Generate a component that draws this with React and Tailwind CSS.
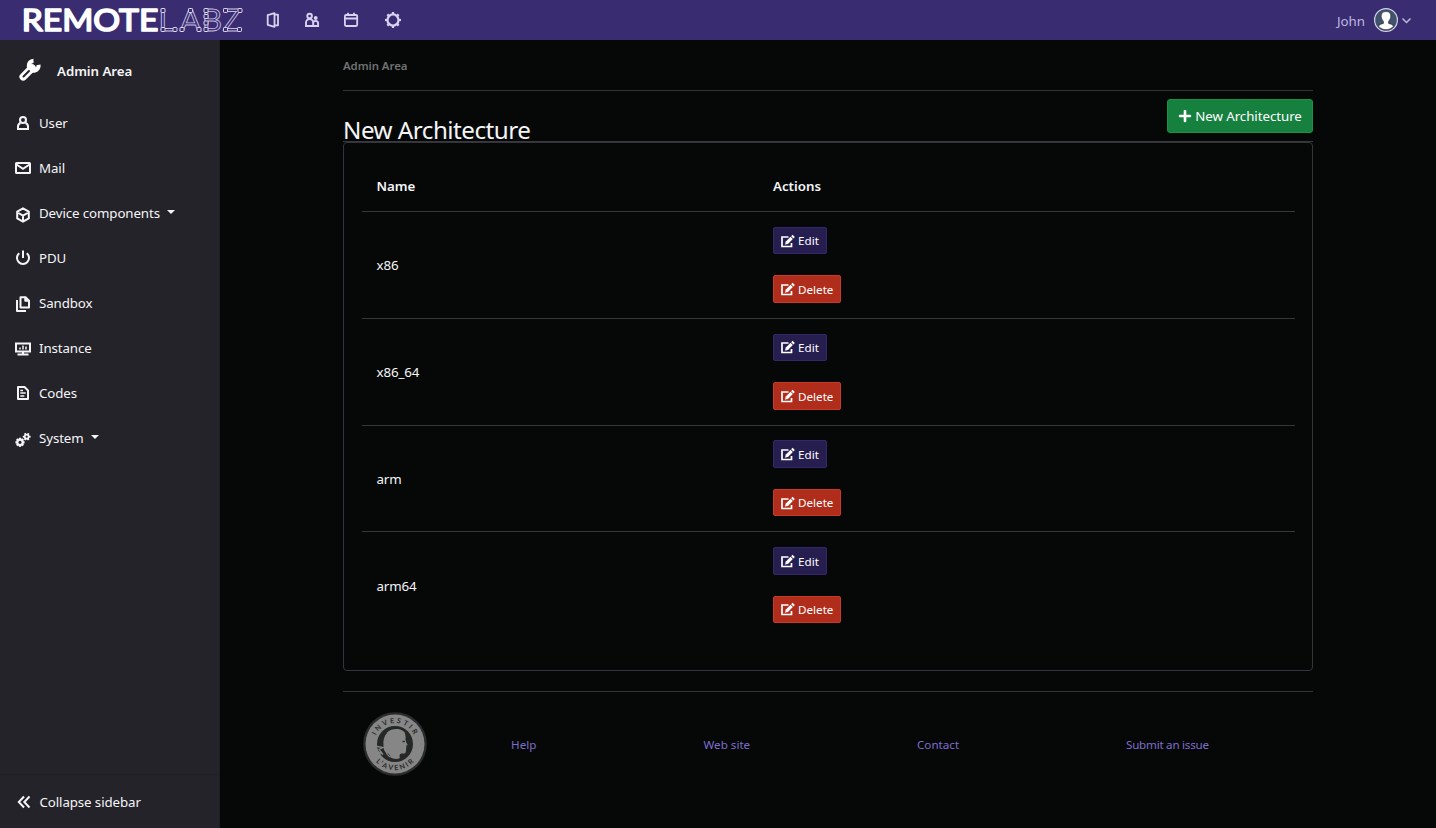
import React from "react";
import { FaPlus } from "react-icons/fa";

function Icon({ children, size = 16, className = "", sw = 2 }) {
  return (
    <svg width={size} height={size} viewBox="0 0 16 16" fill="none" stroke="currentColor" strokeWidth={sw} className={"shrink-0 " + className}>
      {children}
    </svg>
  );
}

function Logo() {
  const nodes = [
    [163, 10.5], [163, 29.5], [175, 29.5], [182, 29.5], [190.5, 10.5], [199, 29.5],
    [206, 10.5], [206, 16.5], [206, 23], [206, 29.5], [225.5, 10.5], [240, 10.5], [225.5, 29.5], [239.5, 29.5],
  ];
  return (
    <svg width="250" height="40" viewBox="0 0 250 40" className="shrink-0" fontFamily="Lato, sans-serif">
      <text x="21.800" y="30.600" fontSize="30.500" fontWeight="400" fill="#fff" stroke="#fff" strokeWidth="1.700" strokeLinejoin="round" textLength="136.500" lengthAdjust="spacingAndGlyphs">REMOTE</text>
      <text x="158.500 180 202 222.500" y="31.200" fontSize="31" fontWeight="400" fill="none" stroke="#c5bfe2" strokeWidth="0.9">LABZ</text>
      {nodes.map(([x, y], i) => (
        <rect key={i} x={x - 2} y={y - 2} width="4" height="4" rx="0.8" fill="#392c70" stroke="#e0dcf0" strokeWidth="1" />
      ))}
    </svg>
  );
}

const Gear = ({ cx, cy, r, w, t, n = 8 }) => (
  <>
    <circle cx={cx} cy={cy} r={r} strokeWidth={w} />
    {Array.from({ length: n }, (_, i) => {
      const a = (i * 2 * Math.PI) / n;
      const c = Math.cos(a), s = Math.sin(a);
      return <line key={i} x1={cx + c * r} y1={cy + s * r} x2={cx + c * (r + t)} y2={cy + s * (r + t)} strokeWidth={w} />;
    })}
  </>
);

const icons = {
  user: (
    <Icon className="relative -top-px">
      <circle cx="8" cy="5" r="3" />
      <path d="M5.500 8C3.700 8.800 3 10.200 3 11.500V14h10v-2.500c0-1.300-.7-2.700-2.500-3.500" />
    </Icon>
  ),
  mail: (
    <Icon className="relative -top-px">
      <rect x="1" y="3" width="14" height="10" rx="0.6" />
      <path d="M1.500 4.500 8 8.800l6.500-4.300" />
    </Icon>
  ),
  device: (
    <Icon className="relative top-px">
      <path d="M8 1.300 13.800 4.600v6.800L8 14.700 2.200 11.400V4.600ZM2.500 5.500 8 8.600l5.500-3.100M8 8.600v6" strokeWidth="2" strokeLinejoin="round" />
    </Icon>
  ),
  pdu: (
    <Icon className="relative -top-px">
      <path d="M4.300 3.200a6 6 0 1 0 7.400 0M8 .5v7.500" />
    </Icon>
  ),
  sandbox: (
    <Icon>
      <path d="M5.500 1.200h5L14 4.700V11.500H5.500ZM2 4v11h9" strokeLinejoin="round" />
      <path d="M9.800 1v4.200H14V4.700L10.500 1.200Z" fill="currentColor" strokeWidth="1" />
    </Icon>
  ),
  instance: (
    <Icon>
      <path d="M1 2.500h14v8H1ZM8 10.500v3M2.500 13.500h11" />
      <path d="M5 6.500v2M8 4.500v4M11 5.500v3" strokeWidth="1.500" />
    </Icon>
  ),
  codes: (
    <Icon className="relative -top-px">
      <path d="M3 2h6.500L13 5.500V14H3Z" strokeLinejoin="round" />
      <path d="M5.300 8h5.400M5.300 11h4M5.300 5.500H8" strokeWidth="1.600" />
    </Icon>
  ),
  system: (
    <Icon className="relative top-px">
      <Gear cx={5} cy={10.300} r={2.700} w={2.200} t={1.900} />
      <Gear cx={11.700} cy={4.700} r={2} w={1.800} t={1.900} n={6} />
    </Icon>
  ),
};

const items = [
  ["user", "User"], ["mail", "Mail"], ["device", "Device components", true], ["pdu", "PDU"],
  ["sandbox", "Sandbox"], ["instance", "Instance"], ["codes", "Codes"], ["system", "System", true],
];

function Header() {
  return (
    <header className="flex h-10 shrink-0 items-center bg-[#392c70] text-[#d8d3f0]">
      <Logo />
      <nav className="flex h-full items-center gap-[23px] pl-[15px]">
        <Icon sw={1.800}>
          <path d="M2.700 3.200 9.500 1.200v13.600l-6.800-2ZM9.500 2.700h3.500v10.600H9.500" strokeLinejoin="round" />
        </Icon>
        <Icon sw={1.900}>
          <circle cx="5.600" cy="4" r="2.300" />
          <path d="M2 14v-3.300c0-2 1.500-3.700 3.600-3.700s3.600 1.700 3.600 3.700V14Z" />
          <circle cx="11.700" cy="6" r="1" />
          <path d="M9.600 9.900c.5-.7 1.200-1 2-1 1.600 0 2.500 1.100 2.500 2.600V14H9" />
        </Icon>
        <Icon sw={1.800}>
          <rect x="1.900" y="3" width="12.300" height="11" rx="1.200" />
          <path d="M2 6.500h12M5 .8V3M11 .8V3" />
        </Icon>
        <Icon size={18} sw={1.700} className="ml-[2px]">
          <Gear cx={8} cy={8} r={4.900} w={2} t={2.200} />
        </Icon>
      </nav>
      <div className="ml-auto flex items-center pr-[24px] text-[13.300px] text-[#beb8e0]">
        <span className="mr-[8px] pt-[3px]">John</span>
        <svg width="26" height="26" viewBox="0 0 26 26">
          <circle cx="13" cy="13" r="11.400" fill="#42526a" stroke="#d5d3e8" strokeWidth="1.200" />
          <path d="M13 4.500c-3.300 0-5 2-4.800 4.700.1 2 .9 3.800 2.200 5v2.200c-2.100.6-4.300 1.100-4.900 2.900C7.400 21.500 10 22.700 13 22.700s5.600-1.200 7.500-3.400c-.6-1.800-2.800-2.300-4.900-2.900v-2.200c1.300-1.200 2.100-3 2.200-5 .2-2.700-1.500-4.700-4.800-4.700Z" fill="#fff" stroke="#17202b" strokeWidth="0.600" />
        </svg>
        <svg width="11" height="8" viewBox="0 0 11 8" className="ml-[2px]" fill="none" stroke="currentColor" strokeWidth="1.500">
          <path d="m1.500 2.500 4 4 4-4" />
        </svg>
      </div>
    </header>
  );
}

function Sidebar() {
  return (
    <aside className="flex w-[220px] shrink-0 flex-col border-r border-[#1d1f22] bg-[#24232a] text-[13.300px] text-[#f5f5f7]">
      <div className="flex h-[61px] items-center pl-[18px] font-semibold">
        <svg width="24" height="24" viewBox="0 0 24 24" fill="none" stroke="#fff" className="relative -top-px shrink-0">
          <path d="M14 10 5.200 18.800" strokeWidth="7.500" strokeLinecap="round" />
          <path d="M20.500 6.800a4.900 4.900 0 1 1-5-4" strokeWidth="4.200" />
          <path d="m11 13-5.500 5.500" stroke="#24232a" strokeWidth="2" strokeLinecap="round" />
        </svg>
        <span className="ml-[15px] pt-[2px] tracking-[-0.05px]">Admin Area</span>
      </div>
      <ul>
        {items.map(([k, label, caret]) => (
          <li key={k} className="flex h-[45px] items-center pl-[15px]">
            {icons[k]}
            <span className="ml-[8px] tracking-[-0.1px]">{label}</span>
            {caret && <span className="mb-[3px] ml-[7px] border-x-4 border-t-4 border-x-transparent border-t-current" />}
          </li>
        ))}
      </ul>
      <div className="mt-auto flex h-[54px] items-center border-t border-[#1b2126] pl-[16px]">
        <Icon sw={2}>
          <path d="M8 2.500 2.800 8 8 13.500M13.500 2.500 8.300 8l5.200 5.500" />
        </Icon>
        <span className="ml-[7.500px] pt-[2px] tracking-[-0.1px]">Collapse sidebar</span>
      </div>
    </aside>
  );
}

function EditIcon() {
  return (
    <svg width="14" height="14" viewBox="0 0 14 14" fill="none" stroke="currentColor" className="mr-[3px] shrink-0">
      <path d="M7.500 3H1v9.500h9.500V9" strokeWidth="1.700" />
      <path d="m5.800 8.800 4.900-4.900" strokeWidth="3.200" />
      <path d="m11.300 3.300 1.400-1.400" strokeWidth="3.200" />
      <path d="m4.100 10.500.8-3.100 2.300 2.300Z" fill="currentColor" strokeWidth="0.200" />
    </svg>
  );
}

function Small({ children, className }) {
  return (
    <button className={"flex items-center rounded-[2px] border pl-[7px] pr-[7px] text-[11.650px] text-white " + className}>
      <EditIcon />
      <span className="pt-px">{children}</span>
    </button>
  );
}

function Seal() {
  return (
    <svg width="64" height="64" viewBox="-32 -32 64 64" fontFamily="Lato, sans-serif" fontWeight="700" fontSize="7" fill="#2a2b2b">
      <circle r="31.800" fill="#2b2c2c" />
      <circle r="29.500" fill="#858685" />
      <circle r="18" fill="#262828" />
      <path d="M-8-11.500C-4-15.500 4-16 8-13c2.500 1 2 3 2.500 5 .5 2-.5 3 .5 5 0 2 2.300 3.500 1.300 4.500h-1.300c.8 2 0 3 0 4.500 0 3-1 4-3.500 3.500-3 0-3.500 2-2.500 4.500-3 1.500-7 1-9.500-.5 0-3-2.500-4-5-5.500-2-2-2-4-2-7-.5-4 .5-9 3.500-12Z" fill="#858685" />
      <path d="m-18 2.500 6 1-4 2 4 5-5-3 3 5M-10 5l2 5 3 3" stroke="#858685" strokeWidth="1.300" fill="none" />
      <path d="M7.500-2.500h2.500" stroke="#262828" strokeWidth="1.300" />
      <path id="seal-top" d="M-21 0A21 21 0 0 1 21 0" fill="none" />
      <path id="seal-bottom" d="M-26 0A26 26 0 0 0 26 0" fill="none" />
      <text textAnchor="middle" letterSpacing="2.300"><textPath href="#seal-top" startOffset="51%">INVESTIR</textPath></text>
      <text textAnchor="middle" letterSpacing="1.900"><textPath href="#seal-bottom" startOffset="51%">L’AVENIR</textPath></text>
    </svg>
  );
}

export default function App() {
  return (
    <div className="flex h-[828px] w-[1436px] flex-col overflow-hidden bg-[#060808] font-['Noto_Sans',sans-serif] text-[13.300px] text-[#f5f5f7]">
      <Header />
      <div className="flex min-h-0 flex-1">
        <Sidebar />
        <main className="flex flex-1 flex-col px-[123px]">
          <div className="flex h-[51px] items-center border-b border-[#323436] pt-[2px] text-[11.400px] font-semibold tracking-[-0.05px] text-[#707271]">Admin Area</div>
          <div className="flex h-[51px] items-start justify-between border-b border-[#38383e]">
            <h1 className="pt-[22px] text-[24.200px] leading-[34px] tracking-[-0.5px]">New Architecture</h1>
            <button className="mt-[8px] flex h-[34px] w-[146px] items-center justify-center rounded-[3px] border border-[#1a9149] bg-[#16803f] text-white">
              <FaPlus size={14} className="mr-[3px]" />
              <span className="pt-[2px] tracking-[-0.05px]">New Architecture</span>
            </button>
          </div>
          <section className="h-[529px] rounded-[4px] border border-[#34343b] pl-[18px] pr-[17px] pt-[18px]">
            <div className="grid h-[51px] grid-cols-[396.500px_1fr] items-center border-b border-[#35373a] pl-[14.500px] pt-[2px] font-semibold">
              <span>Name</span>
              <span>Actions</span>
            </div>
            {["x86", "x86_64", "arm", "arm64"].map((n) => (
              <div key={n} className="grid h-[106.750px] grid-cols-[396.500px_1fr] items-center border-b border-[#35373a] pl-[14.500px] last:border-transparent">
                <span className="pt-[3px] tracking-[-0.1px]">{n}</span>
                <div className="flex flex-col items-start gap-[21px]">
                  <Small className="h-[27.500px] border-[#33276a] bg-[#271e50]">Edit</Small>
                  <Small className="h-[27.500px] border-[#c93a25] bg-[#b02d1b]">Delete</Small>
                </div>
              </div>
            ))}
          </section>
          <footer className="mt-[20px] grid h-[106px] grid-cols-[168px_192.500px_213.500px_209px_1fr] items-center border-t border-[#323436] text-[11.650px] text-[#7c6dcb]">
            <div className="-mt-[2px] pl-5"><Seal /></div>
            <a>Help</a>
            <a>Web site</a>
            <a>Contact</a>
            <a className="tracking-[-0.25px]">Submit an issue</a>
          </footer>
        </main>
      </div>
    </div>
  );
}
